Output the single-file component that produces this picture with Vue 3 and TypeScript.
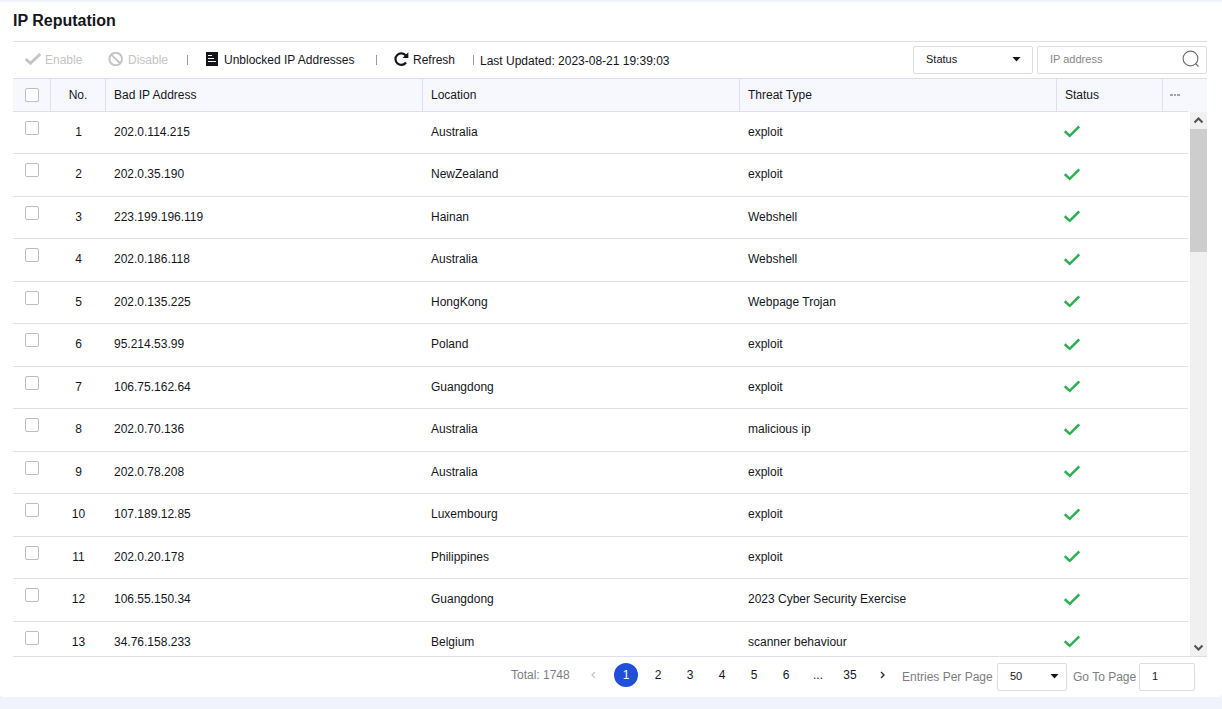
<script setup lang="ts">
import { ref } from 'vue'

interface Entry {
  ip: string
  location: string
  threat: string
}

const entries: Entry[] = [
  { ip: '202.0.114.215', location: 'Australia', threat: 'exploit' },
  { ip: '202.0.35.190', location: 'NewZealand', threat: 'exploit' },
  { ip: '223.199.196.119', location: 'Hainan', threat: 'Webshell' },
  { ip: '202.0.186.118', location: 'Australia', threat: 'Webshell' },
  { ip: '202.0.135.225', location: 'HongKong', threat: 'Webpage Trojan' },
  { ip: '95.214.53.99', location: 'Poland', threat: 'exploit' },
  { ip: '106.75.162.64', location: 'Guangdong', threat: 'exploit' },
  { ip: '202.0.70.136', location: 'Australia', threat: 'malicious ip' },
  { ip: '202.0.78.208', location: 'Australia', threat: 'exploit' },
  { ip: '107.189.12.85', location: 'Luxembourg', threat: 'exploit' },
  { ip: '202.0.20.178', location: 'Philippines', threat: 'exploit' },
  { ip: '106.55.150.34', location: 'Guangdong', threat: '2023 Cyber Security Exercise' },
  { ip: '34.76.158.233', location: 'Belgium', threat: 'scanner behaviour' },
]

const selected = ref<number[]>([])
const currentPage = ref('1')
const pages = ['1', '2', '3', '4', '5', '6', '...', '35']

function toggleAll(event: Event) {
  const checked = (event.target as HTMLInputElement).checked
  selected.value = checked ? entries.map((_, i) => i) : []
}
</script>

<template>
  <div class="page">
    <main class="panel">
      <h1 class="title">IP Reputation</h1>

      <div class="toolbar">
        <button type="button" class="tool enable" disabled>
          <svg width="16" height="16" viewBox="0 0 16 16"><path d="M0.800 7L5.500 11.300L15.200 2" fill="none" stroke="#c4c4c4" stroke-width="2.800" /></svg>
          Enable
        </button>
        <button type="button" class="tool disable" disabled>
          <svg width="16" height="16" viewBox="0 0 16 16"><g fill="none" stroke="#c4c4c4" stroke-width="2"><circle cx="7.700" cy="7" r="6.300" /><path d="M3.300 2.600L12.100 11.400" /></g></svg>
          Disable
        </button>
        <span class="divider"></span>
        <button type="button" class="tool unblocked">
          <svg width="12" height="16" viewBox="0 0 12 16"><path d="M0 0H12V14H0Z" fill="#15161c" /><path d="M2 3.500H6M2 6.500H8M2 9.500H10" stroke="#fff" fill="none" /></svg>
          Unblocked IP Addresses
        </button>
        <span class="divider"></span>
        <button type="button" class="tool refresh">
          <svg width="15" height="16" viewBox="0 0 15 16"><path d="M11.800 3.500A5.800 5.800 0 1 0 12 10.500" fill="none" stroke="#15161c" stroke-width="2.200" /><path d="M14.300 0.300V6H8.500Z" fill="#15161c" /></svg>
          Refresh
        </button>
        <span class="divider"></span>
        <span class="updated">Last Updated: 2023-08-21 19:39:03</span>
        <div class="filters">
          <div class="select status-filter">
            <select aria-label="Status"><option>Status</option></select>
            <svg width="9" height="5" viewBox="0 0 9 5"><path d="M0.500 0H8.500L4.500 4.500Z" fill="#15161c" /></svg>
          </div>
          <div class="search">
            <input type="text" placeholder="IP address" aria-label="IP address" />
            <button type="button" aria-label="Search">
              <svg width="18" height="20" viewBox="0 0 18 20"><g fill="none" stroke="#6b6c70" stroke-width="1.100"><circle cx="8.500" cy="8.500" r="7.400" /><path d="M13.500 13.500L16.500 16.500" /></g></svg>
            </button>
          </div>
        </div>
      </div>

      <div class="grid">
        <div class="viewport">
          <table>
            <colgroup>
              <col class="c-check" /><col class="c-no" /><col /><col /><col /><col class="c-status" /><col class="c-more" />
            </colgroup>
            <thead>
              <tr>
                <th class="check"><input type="checkbox" aria-label="Select all" @change="toggleAll" /></th>
                <th class="no">No.</th>
                <th>Bad IP Address</th>
                <th>Location</th>
                <th>Threat Type</th>
                <th>Status</th>
                <th class="more">
                  <button type="button" aria-label="Columns">
                    <svg width="12" height="4" viewBox="0 0 12 4"><path d="M1 1h3v2h-3zM5 1h2v2h-2zM8 1h3v2h-3z" fill="#a3a5ab" /></svg>
                  </button>
                </th>
              </tr>
            </thead>
            <tbody>
              <tr v-for="(entry, i) in entries" :key="entry.ip">
                <td class="check"><input v-model="selected" type="checkbox" :value="i" :aria-label="entry.ip" /></td>
                <td class="no">{{ i + 1 }}</td>
                <td>{{ entry.ip }}</td>
                <td>{{ entry.location }}</td>
                <td>{{ entry.threat }}</td>
                <td class="state" colspan="2">
                  <svg width="16" height="13" viewBox="0 0 16 13" role="img" aria-label="Enabled"><path d="M0.800 6.200L5.700 10.800L15.300 1.500" fill="none" stroke="#2bb052" stroke-width="2.500" /></svg>
                </td>
              </tr>
            </tbody>
          </table>
        </div>
        <div class="side">
          <div class="side-head"></div>
          <div class="scrollbar">
            <button type="button" aria-label="Scroll up"><svg width="11" height="9" viewBox="0 0 11 9"><path d="M1.500 6.500L5.500 2.500L9.500 6.500" fill="none" stroke="#505050" stroke-width="2" /></svg></button>
            <div class="track"><div class="thumb"></div></div>
            <button type="button" aria-label="Scroll down"><svg width="11" height="9" viewBox="0 0 11 9"><path d="M1.500 2.500L5.500 6.500L9.500 2.500" fill="none" stroke="#505050" stroke-width="2" /></svg></button>
          </div>
        </div>
      </div>

      <footer class="footer">
        <nav class="pager" aria-label="Pages">
          <span class="total">Total: 1748</span>
          <button type="button" disabled aria-label="Previous page"><svg width="6" height="8" viewBox="0 0 6 8"><path d="M4 1L1 4L4 7" fill="none" stroke="#c4c4c4" stroke-width="1.200" /></svg></button>
          <button
            v-for="page in pages"
            :key="page"
            type="button"
            :class="{ current: page === currentPage }"
            @click="page !== '...' && (currentPage = page)"
          >{{ page }}</button>
          <button type="button" aria-label="Next page"><svg width="6" height="8" viewBox="0 0 6 8"><path d="M2 1L5 4L2 7" fill="none" stroke="#303136" stroke-width="1.400" /></svg></button>
        </nav>
        <label class="entries" for="page-size">Entries Per Page</label>
        <div class="select page-size">
          <select id="page-size"><option>50</option></select>
          <svg width="9" height="5" viewBox="0 0 9 5"><path d="M0.500 0H8.500L4.500 4.500Z" fill="#15161c" /></svg>
        </div>
        <label class="goto" for="page-number">Go To Page</label>
        <input id="page-number" v-model="currentPage" class="page-number" type="text" />
      </footer>
    </main>
  </div>
</template>

<style>
body {
  margin: 0;
}
</style>

<style scoped>
.page,
.page * {
  box-sizing: border-box;
}
.page {
  display: flex;
  flex-direction: column;
  height: 100vh;
  padding: 2px 0 12px;
  background: #f0f3fc;
  color: #15161c;
  font-family: "Liberation Sans", Arial, sans-serif;
  font-size: 12px;
}
button,
input,
select {
  margin: 0;
  font: inherit;
  color: inherit;
}
button {
  display: flex;
  align-items: center;
  justify-content: center;
  padding: 0;
  border: 0;
  background: none;
}
svg {
  display: block;
  flex: none;
}
.panel {
  display: flex;
  flex: 1;
  flex-direction: column;
  min-height: 0;
  padding: 0 15px 0 13px;
  border-radius: 0 0 4px 4px;
  background: #fff;
}
.title {
  height: 40px;
  margin: 0;
  border-bottom: 1px solid #dde0ec;
  font-size: 16px;
  line-height: 37px;
}
.toolbar {
  display: flex;
  align-items: center;
  height: 36px;
  padding-left: 12px;
  white-space: nowrap;
}
.tool {
  justify-content: flex-start;
  gap: 4px;
}
.tool:disabled {
  color: #c4c4c4;
}
.enable {
  width: 83px;
}
.disable {
  width: 79px;
}
.unblocked {
  gap: 6px;
  width: 170px;
}
.refresh {
  width: 79px;
}
.divider {
  width: 1px;
  height: 10px;
  margin-right: 18px;
  background: #9a9ba0;
}
.unblocked + .divider {
  margin-right: 17px;
}
.refresh + .divider {
  margin-right: 6px;
}
.updated {
  padding-top: 1px;
}
.filters {
  display: flex;
  gap: 4px;
  margin-left: auto;
}
.select,
.search {
  position: relative;
  display: flex;
  align-items: center;
  height: 28px;
  border: 1px solid #dcdde0;
  border-radius: 2px;
  background: #fff;
  font-size: 11px;
}
.select select {
  width: 100%;
  height: 100%;
  padding: 0 24px 2px 12px;
  border: 0;
  appearance: none;
  background: none;
}
.select svg {
  position: absolute;
  top: 10px;
  right: 11px;
  pointer-events: none;
}
.status-filter {
  width: 120px;
}
.search {
  width: 170px;
  padding: 0 6px 0 12px;
}
.search input {
  flex: 1;
  min-width: 0;
  padding: 0 0 2px;
  border: 0;
  outline: 0;
}
.search input::placeholder {
  color: #85868a;
}
.grid {
  display: flex;
  flex: 1;
  min-height: 0;
  border-bottom: 1px solid #dde0ec;
}
.viewport {
  flex: 1;
  overflow: hidden;
}
table {
  width: 100%;
  border-spacing: 0;
  table-layout: fixed;
}
.c-check {
  width: 38px;
}
.c-no {
  width: 55px;
}
.c-status {
  width: 106px;
}
.c-more {
  width: 25px;
}
th,
td {
  padding: 0 8px;
  border-bottom: 1px solid #dde0ec;
  line-height: 16px;
  text-align: left;
}
th {
  height: 34px;
  border-top: 1px solid #dde0ec;
  border-right: 1px solid #dde0ec;
  background: #f7f8fd;
  font-weight: normal;
}
td {
  height: 42px;
  padding-bottom: 2px;
}
tbody tr:nth-child(even) td {
  height: 43px;
}
th.more {
  padding: 0 6px;
  border-right: 0;
}
.no {
  padding-right: 0;
  padding-left: 0;
  text-align: center;
}
.check {
  padding: 0 12px;
}
td.check {
  padding-bottom: 10px;
}
.state {
  padding-left: 7px;
}
.check input {
  display: block;
  width: 14px;
  height: 14px;
  border: 1px solid #bdbec2;
  border-radius: 2px;
  appearance: none;
  background: #fff;
}
.check input:checked {
  background: #214fdb;
}
.side {
  display: flex;
  flex-direction: column;
  width: 19px;
}
.side-head {
  height: 34px;
  border-top: 1px solid #dde0ec;
  background: #f7f8fb;
}
.scrollbar {
  display: flex;
  flex: 1;
  flex-direction: column;
  width: 17px;
  margin-left: auto;
  background: #f0f0f0;
}
.scrollbar button {
  height: 17px;
}
.track {
  flex: 1;
}
.thumb {
  height: 123px;
  background: #cdcdcd;
}
.footer {
  display: flex;
  align-items: center;
  justify-content: flex-end;
  height: 40px;
  padding-right: 12px;
  color: #7c7d82;
  white-space: nowrap;
}
.pager {
  display: flex;
  align-items: center;
  gap: 8px;
  padding-bottom: 4px;
}
.total {
  width: 63px;
}
.pager button {
  width: 24px;
  height: 24px;
  border-radius: 50%;
  color: #15161c;
}
.pager button.current {
  background: #214fdb;
  color: #fff;
}
.entries {
  width: 95px;
  margin-left: 8px;
}
.page-size {
  width: 70px;
  color: #15161c;
}
.page-size svg {
  right: 7px;
}
.goto {
  width: 66px;
  margin-left: 6px;
}
.page-number {
  width: 56px;
  height: 28px;
  padding: 0 12px 2px;
  border: 1px solid #dcdde0;
  border-radius: 2px;
  color: #15161c;
  font-size: 11px;
}
</style>
